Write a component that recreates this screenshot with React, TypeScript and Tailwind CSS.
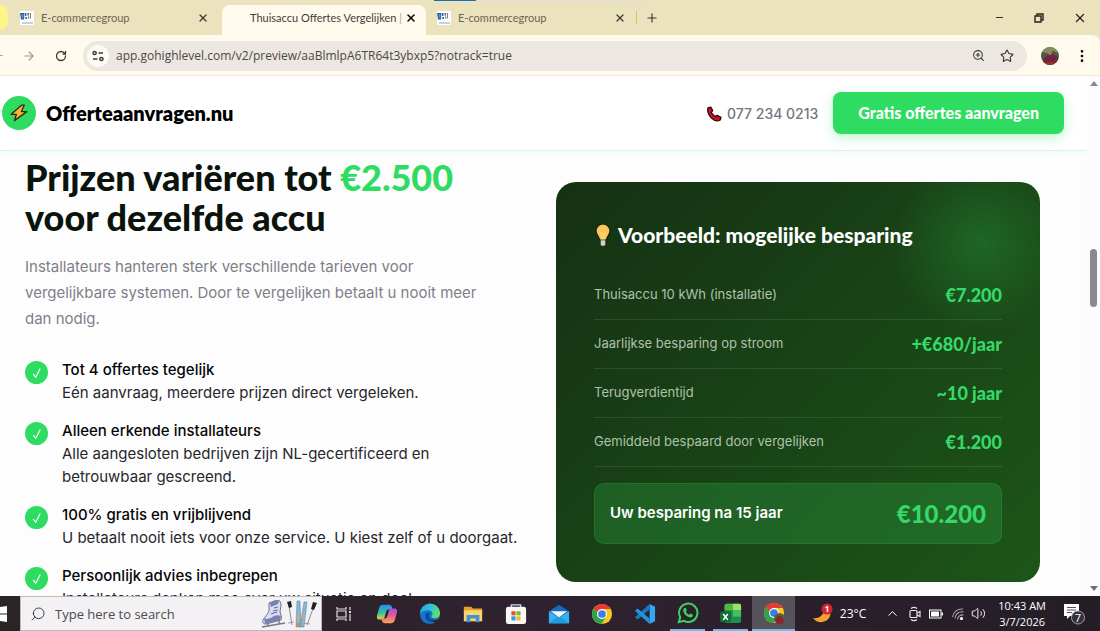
import type { ReactNode } from "react";
import { ArrowLeft, ArrowRight, ChevronUp, Minus, MoreVertical, Plus, RotateCw, Search, Star, Volume2, X, ZoomIn } from "lucide-react";

const voordelen = [
  { titel: "Tot 4 offertes tegelijk", tekst: ["Eén aanvraag, meerdere prijzen direct vergeleken."] },
  { titel: "Alleen erkende installateurs", tekst: ["Alle aangesloten bedrijven zijn NL-gecertificeerd en", "betrouwbaar gescreend."] },
  { titel: "100% gratis en vrijblijvend", tekst: ["U betaalt nooit iets voor onze service. U kiest zelf of u doorgaat."] },
  { titel: "Persoonlijk advies inbegrepen", tekst: ["Installateurs denken mee over uw situatie en doel."] },
];

const besparingen = [
  ["Thuisaccu 10 kWh (installatie)", "€7.200"],
  ["Jaarlijkse besparing op stroom", "+€680/jaar"],
  ["Terugverdientijd", "~10 jaar"],
  ["Gemiddeld bespaard door vergelijken", "€1.200"],
];

const Favicon = () => (
  <svg viewBox="0 0 14 14" className="size-[14px] shrink-0">
    <rect width="14" height="14" fill="#fdfdfd" />
    <path d="M0 2h4.500l-.5 6.500H1z" fill="#1b62a8" />
    <path d="M5 2h1.500v3H5zM5.300 6h1.700v2H5.300zM7.500 2h1.600v2.500H7.500zM8 5.500h1.200v2H8zM10 2h.8v5.500H10z" fill="#5a6478" />
    <path d="M1.500 4h2M1.500 6h2" stroke="#9fd0f2" strokeWidth=".8" />
    <path d="M2 12h11" stroke="#8f9fd8" />
  </svg>
);

const Tab = ({ titel }: { titel: string }) => (
  <div className="flex min-w-0 flex-1 items-center gap-[7px] text-[#6b6554]">
    <Favicon />
    <span className="flex-1 truncate">{titel}</span>
    <button aria-label="Tabblad sluiten" className="text-[#3c392e]">
      <X size={12} strokeWidth={2.5} />
    </button>
  </div>
);

const BrowserBar = () => (
  <div className="shrink-0 bg-[#ebe2be] font-['Open_Sans',sans-serif]">
    <div className="relative flex h-[35px] items-stretch font-[Lato,sans-serif] text-[11px]">
      <div className="absolute left-[434px] top-0 h-px w-[42px] bg-[#1770b8]" />
      <div className="absolute left-[476px] top-0 h-px w-[170px] bg-[#dfe0dc]" />
      <div className="my-[5px] w-2 shrink-0 rounded-r-xl bg-[#fbf58c]" />
      <div className="flex w-[214px] shrink-0 items-center pl-3 pr-[13px] pt-px">
        <Tab titel="E-commercegroup" />
      </div>
      <div className="mt-[5px] flex w-[204px] shrink-0 items-center rounded-t-lg bg-[#fffaec] pb-1 pl-7 pr-[9px]">
        <span className="flex-1 whitespace-nowrap text-[#3f3d38]">
          Thuisaccu Offertes Vergelijken <span className="text-[#a9a699]">|</span>
        </span>
        <button aria-label="Tabblad sluiten" className="text-black">
          <X size={12} strokeWidth={3} />
        </button>
      </div>
      <div className="flex w-[206px] shrink-0 items-center pl-[11px] pr-[6px] pt-px">
        <Tab titel="E-commercegroup" />
      </div>
      <div className="my-[11px] ml-1 w-px bg-[#dcc25a]" />
      <button aria-label="Nieuw tabblad" className="ml-2 text-[#3c392e]">
        <Plus size={14} strokeWidth={2} />
      </button>
      <div className="ml-auto flex items-center gap-[29px] pr-[13px] text-[#26241c]">
        <button aria-label="Minimaliseren"><Minus size={11} strokeWidth={2} /></button>
        <button aria-label="Verkleinen">
          <svg viewBox="0 0 10 10" className="size-[10px]" fill="none" stroke="currentColor" strokeWidth="1.4">
            <path d="M1 3h6v6H1zM3 3V1h6v6H7" />
          </svg>
        </button>
        <button aria-label="Sluiten"><X size={14} strokeWidth={2.2} /></button>
      </div>
    </div>

    <div className="flex h-10 items-center rounded-tr-lg bg-[#fffaec] pr-[10px] pt-px text-[#3d3c39]">
      <button aria-label="Terug" className="-ml-2 text-[#aaa69c]"><ArrowLeft size={13} /></button>
      <button aria-label="Vooruit" className="ml-[17px] text-[#9a968d]"><ArrowRight size={14} /></button>
      <button aria-label="Vernieuwen" className="ml-[19px]"><RotateCw size={12} strokeWidth={2.6} /></button>
      <div className="ml-4 flex h-[30px] flex-1 items-center rounded-full bg-[#ede7e2] pl-1 pr-[13px]">
        <button aria-label="Sitegegevens" className="flex size-[22px] shrink-0 items-center justify-center rounded-full bg-[#fdf9f3]">
          <svg viewBox="0 0 12 12" className="size-3" fill="none" stroke="currentColor" strokeWidth="1.5">
            <circle cx="2.6" cy="3" r="1.6" />
            <path d="M6.5 3H11M1 9h4.500" />
            <circle cx="9.4" cy="9" r="1.6" />
          </svg>
        </button>
        <input
          aria-label="Adres"
          readOnly
          value="app.gohighlevel.com/v2/preview/aaBlmlpA6TR64t3ybxp5?notrack=true"
          className="ml-[7px] min-w-0 flex-1 bg-transparent text-xs text-[#4a4845] outline-none"
        />
        <button aria-label="Zoomen"><ZoomIn size={13} /></button>
        <button aria-label="Favoriet" className="ml-[15px]"><Star size={14} /></button>
      </div>
      <svg viewBox="0 0 18 18" className="ml-[14px] size-[18px] rounded-full">
        <rect width="18" height="18" fill="#4d5a3b" />
        <path d="M0 4l5-4h9l4 6-6-2-5 3z" fill="#7c8f5c" />
        <path d="M2 12l4-3 1-3 3-1 3 3 4 2v8H2z" fill="#6b2740" />
        <circle cx="9" cy="6" r="2" fill="#b0746c" />
        <path d="M3 15h11v3H3z" fill="#a62a24" />
      </svg>
      <button aria-label="Menu" className="ml-[15px] text-black"><MoreVertical size={16} strokeWidth={2} /></button>
    </div>
    <div className="h-px bg-[#f8e6da]" />
  </div>
);

const Header = () => (
  <header className="flex h-[75px] shrink-0 items-center border-b border-[#dcf6e5] bg-white pl-[2px] pr-[23px] shadow-[0_1px_4px_rgba(46,220,98,0.1)]">
    <a href="#home" className="flex items-center gap-[10px]">
      <span className="flex size-[34px] items-center justify-center rounded-full bg-[#2edc62]">
        <svg viewBox="0 0 18 18" className="size-[18px]">
          <path d="M11.500 1.200L1.200 10.300h5.200l-2 6.300L16.800 7.600h-5.400l2.800-6.400z" fill="#f8b53a" stroke="#2f2a12" strokeWidth="1.3" strokeLinejoin="round" />
        </svg>
      </span>
      <span className="font-[Lato,sans-serif] text-xl font-extrabold text-black">Offerteaanvragen.nu</span>
    </a>
    <a href="tel:0772340213" className="ml-auto flex items-center gap-[5px] pt-[2px] font-[Inter,sans-serif] text-sm font-medium text-[#74757e]">
      <svg viewBox="0 0 16 16" className="size-4">
        <path d="M2 1.800L4.800 1l1.900 3.600-1.500 2 3.800 4 2.200-1.200 3.800 2-.8 2.600c-2.300 1.500-6 .7-8.800-1.900S1 5 2 1.800z" fill="#cf1126" stroke="#1c0507" strokeWidth="1.2" strokeLinejoin="round" />
      </svg>
      077 234 0213
    </a>
    <button className="ml-[15px] h-[42px] rounded-lg bg-[#2edc62] px-[25px] font-[Lato,sans-serif] text-base font-black text-white shadow-[0_4px_12px_rgba(46,220,98,0.3)]">
      Gratis offertes aanvragen
    </button>
  </header>
);

const Voordelen = () => (
  <div className="pt-[6px]">
    <h2 className="font-[Lato,sans-serif] text-4xl font-black leading-10 text-[#0a140c]">
      Prijzen variëren tot <span className="text-[#2edc62]">€2.500</span>
      <br />
      voor dezelfde accu
    </h2>
    <p className="mt-[17px] max-w-[480px] text-[15px] leading-[26px] text-[#7f7f88]">
      Installateurs hanteren sterk verschillende tarieven voor vergelijkbare systemen. Door te vergelijken betaalt u nooit meer dan nodig.
    </p>
    <ul className="mt-[26px] flex flex-col gap-[15px] text-[15px] leading-[23px]">
      {voordelen.map((v) => (
        <li key={v.titel} className="flex gap-[14px]">
          <span className="mt-[3px] flex size-[23px] shrink-0 items-center justify-center rounded-full bg-[#2edc62]">
            <svg viewBox="0 0 12 12" className="size-3" fill="none" stroke="#fff" strokeWidth="1.2">
              <path d="M2.200 7.200l2.600 3L9.200 1.600" />
            </svg>
          </span>
          <div>
            <strong className="block font-medium text-[#050607]">{v.titel}</strong>
            {v.tekst.map((regel) => (
              <span key={regel} className="block whitespace-nowrap text-[#26272b]">{regel}</span>
            ))}
          </div>
        </li>
      ))}
    </ul>
  </div>
);

const Besparing = () => (
  <div className="mt-[31px] self-start overflow-hidden rounded-[20px] bg-[radial-gradient(circle_at_425px_60px,rgba(46,220,98,0.22),transparent_90px),linear-gradient(135deg,#153113,#1d5519)] px-[38px] pb-[38px] pt-[37px]">
    <h3 className="flex items-center gap-[6px] font-[Lato,sans-serif] text-[21px] font-black leading-8 text-white">
      <svg viewBox="0 0 18 24" className="h-6 w-[18px]">
        <path d="M9 1a7 7 0 0 0-7 7c0 3.500 3 5 3.600 9h6.800c.6-4 3.600-5.500 3.600-9a7 7 0 0 0-7-7z" fill="#fbc658" stroke="#12200c" strokeWidth="1.200" />
        <path d="M6.500 17h5v4.500l-1 1.500h-3l-1-1.500z" fill="#d5cfd0" stroke="#413b35" strokeWidth=".6" />
        <path d="M6 9l2 2 1-1 1 1 2-2M8 11v6M10 11v6" fill="none" stroke="#fde49a" strokeWidth=".8" />
      </svg>
      Voorbeeld: mogelijke besparing
    </h3>
    <dl className="mt-5">
      {besparingen.map(([naam, bedrag]) => (
        <div key={naam} className="flex h-[49px] items-center justify-between border-b border-white/10">
          <dt className="text-[13px] text-[#b0c1ad]">{naam}</dt>
          <dd className="font-[Lato,sans-serif] text-lg font-black text-[#35d968]">{bedrag}</dd>
        </div>
      ))}
      <div className="mt-4 flex h-[61px] items-center justify-between rounded-[10px] border border-[#2edc62]/15 bg-[#2b9c42]/35 px-[15px]">
        <dt className="text-[15px] font-semibold text-white">Uw besparing na 15 jaar</dt>
        <dd className="font-[Lato,sans-serif] text-2xl font-black text-[#35d968]">€10.200</dd>
      </div>
    </dl>
  </div>
);

const chromeRing = (
  <>
    <circle cx="12" cy="12" r="11" fill="#f9c81e" />
    <path d="M12 12L2.500 6.500A11 11 0 0 1 21.500 6.500H12z" fill="#e53a2f" />
    <path d="M12 12L2.500 6.500A11 11 0 0 0 11.500 23l5-8.300z" fill="#2fa24e" />
    <circle cx="12" cy="12" r="5.500" fill="#fff" />
    <circle cx="12" cy="12" r="4.200" fill="#397ee6" />
  </>
);

const gesloten = "w-[43px]";
const geopend = "mx-1 w-[35px] border-b-2 border-[#76b9ed]";

const apps: { naam: string; status: string; icoon: ReactNode }[] = [
  {
    naam: "Copilot", status: gesloten,
    icoon: (
      <>
        <defs>
          <linearGradient id="copA" x1="0" y1="0" x2="0" y2="1">
            <stop stopColor="#2490f0" /><stop offset=".55" stopColor="#36bfa0" /><stop offset="1" stopColor="#e9d13d" />
          </linearGradient>
          <linearGradient id="copB" x1="0" y1="0" x2="0" y2="1">
            <stop stopColor="#a24de8" /><stop offset=".5" stopColor="#ee5b8c" /><stop offset="1" stopColor="#fba652" />
          </linearGradient>
        </defs>
        <path d="M8 2h6c2 0 3 1 3.500 3l.5 2h-4c-2 0-2.500 1-3 3l-1.500 5c-.5 2-1.500 3-3.500 3H4c-3 0-3.500-2-2.700-5l2-7C4 3 5.500 2 8 2z" fill="url(#copA)" />
        <path d="M16 22h-6c-2 0-3-1-3.500-3L6 17h3c2 0 3-1 3.500-3L14 9c.5-2 1.500-3 3.500-3H20c3 0 3.500 2 2.700 5l-2 7c-.7 3-2.200 4-4.700 4z" fill="url(#copB)" />
      </>
    ),
  },
  {
    naam: "Edge", status: gesloten,
    icoon: (
      <>
        <defs>
          <linearGradient id="edge" x1="0" y1="0" x2="1" y2=".3">
            <stop stopColor="#249be4" /><stop offset=".6" stopColor="#35c5d5" /><stop offset="1" stopColor="#67dc65" />
          </linearGradient>
        </defs>
        <circle cx="12" cy="12" r="11" fill="#1475cb" />
        <path d="M1 12A11 11 0 0 1 23 11c0 4-3 5.500-6 5.500-2.500 0-4-1-3-2.500 2-4-1-6.500-5-6-4 .3-7 2-8 4z" fill="url(#edge)" />
        <path d="M8 11c-3 4 0 10 6 10 3 0 6-1.500 7-3-5 2-10-.5-10-4 0-1 .5-2 1-2.500-1-1.500-3-1.500-4-.5z" fill="#104d98" />
        <path d="M13.500 17.500c3 1.800 6.500 1.200 9.500-.5l1 4-6 2z" fill="#2e2530" />
      </>
    ),
  },
  {
    naam: "Verkenner", status: gesloten,
    icoon: (
      <>
        <path d="M2 4h8l2 2h10v4H2z" fill="#e0a32f" />
        <path d="M2 8h20v12H2z" fill="#fbd568" />
        <path d="M5 13h14v8h-4v-4H9v4H5z" fill="#4293d5" />
      </>
    ),
  },
  {
    naam: "Store", status: gesloten,
    icoon: (
      <>
        <path d="M7 6V2h10v4" fill="none" stroke="#c9dff1" strokeWidth="1.500" />
        <rect x="1" y="4" width="22" height="19" rx="2.500" fill="#f7f7f7" />
        <path d="M7 9h4.500v4.500H7z" fill="#e84f2b" /><path d="M12.500 9H17v4.500h-4.500z" fill="#7cb928" />
        <path d="M7 14.500h4.500V19H7z" fill="#26a0e1" /><path d="M12.500 14.500H17V19h-4.500z" fill="#f8b81d" />
      </>
    ),
  },
  {
    naam: "Mail", status: gesloten,
    icoon: (
      <>
        <path d="M1 9l11-7 11 7v13H1z" fill="#176ab5" />
        <path d="M1 9l11 7 11-7v13H1z" fill="#35b2ec" />
        <path d="M1 22l11-8 11 8z" fill="#209bdd" />
        <path d="M3 9h18l-9 6.500z" fill="#f5f7f8" />
      </>
    ),
  },
  { naam: "Chrome", status: gesloten, icoon: chromeRing },
  {
    naam: "VS Code", status: gesloten,
    icoon: (
      <>
        <path d="M17 1l6 3v16l-6 3z" fill="#34a7ef" />
        <path d="M17 1v6L4 18l-3-2.500z" fill="#1779c2" />
        <path d="M17 23v-6L4 6 1 8.500z" fill="#2393dc" />
      </>
    ),
  },
  {
    naam: "WhatsApp", status: geopend,
    icoon: (
      <>
        <path d="M2 22l1.500-5.500A10 10 0 1 1 7.500 20.500z" fill="none" stroke="#39d365" strokeWidth="2.200" />
        <path d="M8 6.500l1.500-.2 1.200 2.900-1 1.300c.8 1.600 2 2.700 3.700 3.400l1.200-1.400 2.800 1.300c0 2-1.500 3.200-3.200 3C10.500 16.500 7 12.500 6.800 9.300 6.800 8 7.300 7 8 6.500z" fill="#39d365" />
      </>
    ),
  },
  {
    naam: "Excel", status: geopend,
    icoon: (
      <>
        <rect x="5" y="2" width="18" height="21" rx="2" fill="#1e8f48" />
        <path d="M5 4a2 2 0 0 1 2-2h7v7H5z" fill="#51b944" /><path d="M14 2h7a2 2 0 0 1 2 2v5h-9z" fill="#a1e06c" />
        <path d="M14 9h9v7h-9z" fill="#42c064" />
        <rect y="10" width="12" height="12" rx="2" fill="#146b38" />
        <path d="M3.500 13l5 6.500M8.500 13l-5 6.500" stroke="#fff" strokeWidth="1.700" />
      </>
    ),
  },
  {
    naam: "Chrome (profiel)", status: "w-[43px] border-b-2 border-[#76b9ed] bg-[#57535a]",
    icoon: (
      <>
        {chromeRing}
        <circle cx="18" cy="18" r="6" fill="#56633a" />
        <path d="M13 20l3-5h4l3 5-2 4h-5z" fill="#8b2530" />
      </>
    ),
  },
];

const Taskbar = () => (
  <footer className="flex h-[35px] shrink-0 items-stretch overflow-hidden bg-gradient-to-r from-[#2b2424] via-[#2f2230] to-[#241d26] font-['Open_Sans',sans-serif] text-white">
    <button aria-label="Start" className="flex w-5 items-center">
      <svg viewBox="0 0 7 16" className="h-4 w-[7px]">
        <path d="M0 1l7-1v7.500H0zM0 8.500h7V16l-7-1z" fill="#fff" />
      </svg>
    </button>
    <label className="flex w-[302px] shrink-0 items-center gap-[9px] border border-[#bdbbbd] bg-[#f3f1f3] pl-[9px] pr-1 text-[#3f3e40]">
      <Search size={16} strokeWidth={1.500} className="-scale-x-100" />
      <input aria-label="Zoeken" placeholder="Type here to search" className="min-w-0 flex-1 bg-transparent pt-[2px] text-[13px] outline-none placeholder:text-[#4c4b4d]" />
      <svg viewBox="0 0 56 28" className="h-7 w-14">
        <path d="M8 3l8-3c3 0 4 2 4 5l-1 7c1 3 2 5 1 8L5 24c-3 0-4-2-3-4 2-4 7-7 6-12z" fill="#dcdcf0" stroke="#5e6289" strokeWidth=".9" />
        <path d="M9 3l7-3 2 1-1 3-7 3zM3 18c4 2 7 0 10-2 3-1 4-1 7 0l-1 4L4 24z" fill="#7b80b4" />
        <path d="M13 8l4-1M12 11l5-1M10 14l6-2" stroke="#6b70a2" strokeWidth="1.100" />
        <path d="M1 27l23-4M7 23v3M18 20v4" stroke="#777790" strokeWidth="1.400" />
        <path d="M28 6l3 19M53 6l-7 19" stroke="#8b8d9b" />
        <path d="M26 2l4-1 1 6-3 1zM52 2l4 1-3 7-3-1z" fill="#1e1f28" />
        <path d="M27 23l6-1M43 23l6 1" stroke="#8b8d9b" strokeWidth=".8" />
        <path d="M36 1h3l1 26h-5zM43 2h3l-3 25h-4z" fill="#83b8d8" stroke="#4f7f9f" strokeWidth=".5" />
        <path d="M35.500 16h4v3h-4zM41 15h3l-.5 4H41z" fill="#d9a478" /><path d="M35 23h5v3h-5z" fill="#c98b64" />
      </svg>
    </label>
    <div className="flex">
      <button aria-label="Taakweergave" className="flex w-[43px] items-center justify-center">
        <svg viewBox="0 0 16 16" className="size-4" fill="none" stroke="#e4e0df" strokeWidth="1.200">
          <path d="M1 1v2h9V1M1 15v-2h9v2M1 5h9v6H1zM14 1v3M14 8v7" />
          <path d="M13 6h2" strokeWidth="2" />
        </svg>
      </button>
      {apps.map((app) => (
        <button key={app.naam} aria-label={app.naam} className={"flex items-center justify-center " + app.status}>
          <svg viewBox="0 0 24 24" className="size-[22px]">{app.icoon}</svg>
        </button>
      ))}
    </div>
    <div className="ml-auto flex items-center pr-[15px]">
      <svg viewBox="0 0 22 22" className="size-[22px]">
        <path d="M13 3c5 3 7 8 4 12-3 5-12 6-16 0 6 1 12-3 12-12z" fill="#f5a12d" />
        <circle cx="15" cy="6" r="5.500" fill="#d3262e" />
        <text x="15" y="9" textAnchor="middle" fill="#fff" fontSize="8" fontWeight="700">1</text>
      </svg>
      <span className="ml-[6px] text-xs">23°C</span>
      <ChevronUp size={15} strokeWidth={1.600} className="ml-[19px]" />
      <svg viewBox="0 0 14 16" className="ml-2 h-4 w-[14px]" fill="none" stroke="#e8e4e8" strokeWidth="1.200">
        <rect x="2" y="4.500" width="7" height="7" rx="1" />
        <path d="M9 7l3-1.500v5L9 9M3 2.500C5 1 7 1 9 2.500M3 13.500c2 1.500 4 1.500 6 0" />
      </svg>
      <svg viewBox="0 0 14 10" className="ml-[7px] h-[10px] w-[14px]">
        <rect x=".5" y="1" width="11.500" height="8" fill="none" stroke="#fff" />
        <path d="M2 2.500h8v5H2zM12.500 3.500H14v3h-1.500z" fill="#fff" />
      </svg>
      <svg viewBox="0 0 14 14" className="ml-2 size-[14px]" fill="none" stroke="#aaa6ab" strokeWidth="1.100">
        <path d="M1.500 10A9.500 9.500 0 0 1 12 2M4 11.500A7 7 0 0 1 12.500 5M6.500 12.500A5 5 0 0 1 12.500 8" />
        <circle cx="10.500" cy="11.500" r="1" fill="#fff" stroke="#fff" />
      </svg>
      <Volume2 size={15} strokeWidth={1.500} className="ml-[6px]" />
      <div className="ml-3 text-center text-[11px] leading-4">
        <div>10:43 AM</div>
        <div>3/7/2026</div>
      </div>
      <svg viewBox="0 0 22 22" className="ml-[17px] size-[22px]">
        <path d="M1 1h15v12H7l-3 3v-3H1z" fill="#fff" />
        <path d="M4 4.500h9M4 7h9M4 9.500h5" stroke="#55505a" />
        <circle cx="15" cy="14.500" r="6.500" fill="#343039" stroke="#a4a0a8" />
        <text x="15" y="18.500" textAnchor="middle" fill="#fff" fontSize="11">7</text>
      </svg>
    </div>
  </footer>
);

const App = () => (
  <div className="flex h-screen flex-col overflow-hidden bg-[#fefdfe] font-[Inter,sans-serif]">
    <BrowserBar />
    <div className="flex min-h-0 flex-1">
      <div className="flex min-w-0 flex-1 flex-col overflow-hidden">
        <Header />
        <main className="grid min-h-0 flex-1 grid-cols-[minmax(0,1fr)_484px] gap-8 overflow-hidden pl-[25px] pr-[47px]">
          <Voordelen />
          <Besparing />
        </main>
      </div>
      {/* Schuifbalk */}
      <div className="flex w-[13px] flex-col items-center bg-[#fcfbfd] py-[5px]">
        <svg viewBox="0 0 8 5" className="h-[5px] w-2"><path d="M0 5l4-5 4 5z" fill="#8a888b" /></svg>
        <div className="mt-[163px] h-[58px] w-[7px] rounded-full bg-[#8b898c]" />
        <svg viewBox="0 0 8 5" className="mt-auto h-[5px] w-2"><path d="M0 0l4 5 4-5z" fill="#6f6d70" /></svg>
      </div>
    </div>
    <Taskbar />
  </div>
);

export default App;
